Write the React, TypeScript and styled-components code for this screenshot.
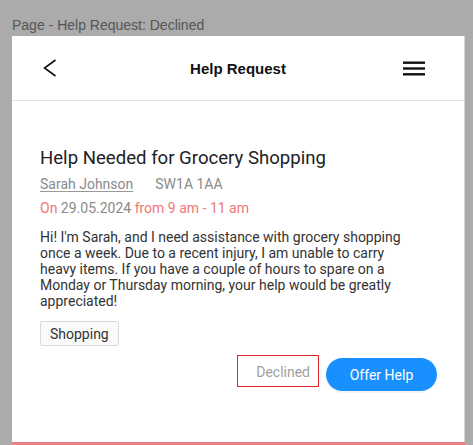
import React from "react";
import styled, { createGlobalStyle } from "styled-components";

const Global = createGlobalStyle`
  html, body { margin: 0; padding: 0; }
  body {
    background: #ababab;
    font-family: Roboto, "Liberation Sans", sans-serif;
    overflow: hidden;
  }
`;

const Page = styled.div`
  width: 473px;
  height: 445px;
  display: flex;
  flex-direction: column;
  overflow: hidden;
`;

const PageLabel = styled.div`
  height: 36px;
  flex: none;
  padding: 17px 0 0 12px;
  box-sizing: border-box;
  font-family: "Liberation Sans", Arial, sans-serif;
  font-size: 14px;
  line-height: 16px;
  color: #555;
  white-space: nowrap;
`;

const Panel = styled.div`
  margin: 0 8px 0 12px;
  background: #fff;
  height: 406px;
  flex: none;
  display: flex;
  flex-direction: column;
  border-right: 1px solid #d6d6d6;
  box-sizing: border-box;
`;

const Header = styled.div`
  height: 65px;
  flex: none;
  box-sizing: border-box;
  display: grid;
  grid-template-columns: 64px 1fr 64px;
  align-items: center;
  border-bottom: 1px solid #e3e3e3;
`;

const IconBtn = styled.div<{ $align: "left" | "right" }>`
  display: flex;
  align-items: center;
  justify-content: ${(p) => (p.$align === "left" ? "flex-start" : "flex-end")};
  padding: ${(p) => (p.$align === "left" ? "0 0 0 31px" : "0 39px 0 0")};
  height: 100%;
`;

const HeaderTitle = styled.div`
  text-align: center;
  font-family: "Liberation Sans", Arial, sans-serif;
  font-weight: 700;
  font-size: 15px;
  color: #111;
`;

const Content = styled.div`
  padding: 46px 27px 0 28px;
  display: flex;
  flex-direction: column;
`;

const Title = styled.h1`
  margin: 0;
  font-weight: 400;
  font-size: 18.6px;
  line-height: normal;
  color: #222;
`;

const MetaRow = styled.div`
  margin-top: 7px;
  display: flex;
  gap: 22px;
  font-size: 14px;
  line-height: normal;
  color: #8a8a8a;
`;

const Name = styled.span`
  text-decoration: underline;
  text-underline-offset: 2px;
  text-decoration-color: #9a9a9a;
`;

const DateLine = styled.div`
  margin-top: 8px;
  font-size: 14px;
  line-height: normal;
  color: #f07878;
`;

const Muted = styled.span`
  color: #8a8a8a;
`;

const Body = styled.p`
  margin: 13px 0 0;
  max-width: 370px;
  font-size: 14px;
  line-height: normal;
  color: #333;
`;

const Tags = styled.div`
  margin-top: 12px;
  display: flex;
`;

const Tag = styled.span`
  height: 25px;
  padding: 0 9px;
  box-sizing: border-box;
  display: flex;
  align-items: center;
  border: 1px solid #dadada;
  border-radius: 2px;
  background: #fafafa;
  font-size: 14px;
  color: #333;
`;

const Actions = styled.div`
  margin-top: 8px;
  display: flex;
  justify-content: flex-end;
  align-items: flex-start;
  gap: 7px;
`;

const Status = styled.div`
  width: 82px;
  height: 32px;
  margin-top: 1px;
  box-sizing: border-box;
  border: 1px solid #e2262b;
  display: flex;
  align-items: center;
  justify-content: flex-end;
  padding: 2px 8px 0 0;
  font-size: 14px;
  color: #a0a0a0;
`;

const PrimaryButton = styled.button`
  width: 111px;
  height: 33px;
  margin-top: 4px;
  border: none;
  border-radius: 17px;
  background: #1890ff;
  color: #fff;
  font-family: Roboto, sans-serif;
  font-size: 14px;
  padding: 0;
  box-shadow: 0 2px 0 rgba(0, 0, 0, 0.04);
`;

const Footer = styled.div`
  margin: 0 8px 0 12px;
  height: 3px;
  flex: none;
  background: #e88080;
`;

export default function App() {
  return (
    <Page>
      <Global />
      <PageLabel>Page - Help Request: Declined</PageLabel>
      <Panel>
        <Header>
          <IconBtn $align="left">
            <svg width="14" height="18" viewBox="0 0 14 18">
              <path d="M12.5 1 L1.5 9 L12.5 17" fill="none" stroke="#111" strokeWidth="1.6" />
            </svg>
          </IconBtn>
          <HeaderTitle>Help Request</HeaderTitle>
          <IconBtn $align="right">
            <svg width="22" height="15" viewBox="0 0 22 15">
              <rect x="0" y="0.5" width="22" height="2.4" fill="#111" />
              <rect x="0" y="6.3" width="22" height="2.4" fill="#111" />
              <rect x="0" y="12.1" width="22" height="2.4" fill="#111" />
            </svg>
          </IconBtn>
        </Header>
        <Content>
          <Title>Help Needed for Grocery Shopping</Title>
          <MetaRow>
            <Name>Sarah Johnson</Name>
            <span>SW1A 1AA</span>
          </MetaRow>
          <DateLine>
            On <Muted>29.05.2024</Muted> from 9 am - 11 am
          </DateLine>
          <Body>
            Hi! I'm Sarah, and I need assistance with grocery shopping once a week. Due to a
            recent injury, I am unable to carry heavy items. If you have a couple of hours to
            spare on a Monday or Thursday morning, your help would be greatly appreciated!
          </Body>
          <Tags>
            <Tag>Shopping</Tag>
          </Tags>
          <Actions>
            <Status>Declined</Status>
            <PrimaryButton>Offer Help</PrimaryButton>
          </Actions>
        </Content>
      </Panel>
      <Footer />
    </Page>
  );
}
